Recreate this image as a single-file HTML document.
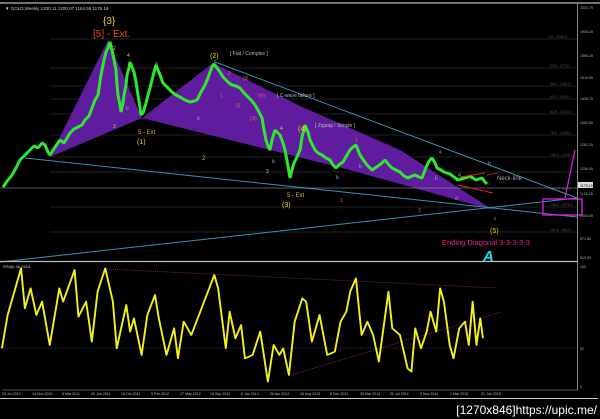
<!DOCTYPE html>
<html><head><meta charset="utf-8"><style>
html,body{margin:0;padding:0;background:#000;width:600px;height:419px;overflow:hidden}
svg{display:block}
text{font-family:"Liberation Sans",sans-serif}
</style></head><body>
<svg width="600" height="419" viewBox="0 0 600 419" xmlns="http://www.w3.org/2000/svg">
<rect width="600" height="419" fill="#000"/>
<line x1="0" y1="3" x2="600" y2="3" stroke="#999" stroke-width="1.5"/>
<text x="5" y="10" font-size="4.5" fill="#ccc">▼ GOLD,Weekly  1200.11 1200.97 1164.56 1175.19</text>
<g stroke="#2c2c2c" stroke-width="0.8">
<line x1="50" y1="39" x2="577" y2="39"/><line x1="50" y1="68" x2="577" y2="68"/>
<line x1="50" y1="86" x2="577" y2="86"/><line x1="50" y1="99" x2="577" y2="99"/>
<line x1="50" y1="114" x2="577" y2="114"/><line x1="50" y1="135" x2="577" y2="135"/>
<line x1="50" y1="157" x2="577" y2="157"/><line x1="50" y1="172" x2="577" y2="172"/>
<line x1="50" y1="207" x2="577" y2="207"/>
<line x1="50" y1="232" x2="577" y2="232"/>
</g>
<g font-size="3.5" fill="#555">
<text x="548" y="38">0.0 - 2006.5</text><text x="550" y="67">23.6 - 1775.1</text>
<text x="550" y="85">38.2 - 1631.9</text><text x="550" y="98">50.0 - 1516.3</text>
<text x="550" y="113">61.8 - 1400.6</text><text x="550" y="134">78.6 - 1236.0</text>
<text x="550" y="156">100.0 - 1026.2</text><text x="550" y="190">127.2 - 891.0</text>
<text x="550" y="206">138.2 - 1079.9</text><text x="550" y="231">161.8 - 521.0</text>
</g>
<polygon points="50,157 108,40 142,118" fill="#6a1fb0" opacity="0.9"/>
<polygon points="142,118 213,63 300,106 400,150 493,210 350,170" fill="#6a1fb0" opacity="0.9"/>
<g stroke="#3a90b5" stroke-width="1" fill="none">
<line x1="25" y1="158" x2="577" y2="217"/>
<line x1="0" y1="262" x2="577" y2="198"/>
<line x1="215" y1="62" x2="577" y2="198"/>
</g>
<line x1="0" y1="188" x2="577" y2="188" stroke="#aaa" stroke-width="0.6"/>
<polyline fill="none" stroke="#2ee82e" stroke-width="3" stroke-linejoin="bevel" points="3,187 8,180 12,175 16,168 20,160 24,156 30,150 34,146 38,148 42,143 45,145 48,152 50,155 55,147 60,140 64,143 70,133 74,129 78,127 82,125 85,120 89,116 92,108 95,100 98,95 101,75 104,60 106,52 108,48 110,42 112,50 113,55 115,65 116,70 117,85 118,95 120,105 121,112 123,103 124,95 126,85 127,75 129,68 130,62 132,67 134,72 136,82 138,95 140,108 141,115 143,113 144,110 146,103 148,95 150,88 152,80 154,72 156,65 158,70 160,75 163,83 165,85 168,88 172,92 176,95 180,97 185,100 190,102 194,101 197,100 201,92 205,85 208,78 210,72 212,67 214,64 217,68 220,72 223,77 226,80 229,83 232,85 236,86 240,88 244,93 248,97 252,101 255,105 259,112 262,118 264,130 266,140 268,146 270,150 272,140 275,130 278,133 280,135 283,143 285,150 288,166 290,178 292,170 294,163 297,157 300,150 302,137 305,125 308,132 310,140 313,146 315,150 318,153 322,155 326,158 330,160 333,165 336,168 340,164 343,162 347,155 350,150 353,147 356,145 358,150 360,155 364,161 367,165 370,168 372,170 375,168 378,166 382,163 385,160 389,165 392,168 396,170 400,172 404,176 408,178 412,176 415,175 419,177 422,178 425,170 428,163 430,160 432,158 435,163 437,168 441,170 444,172 447,173 450,174 454,177 458,180 461,179 465,178 468,177 470,176 473,178 476,180 479,179 482,178 485,182 487,184"/>
<line x1="460" y1="177" x2="485" y2="173" stroke="#e02020" stroke-width="1"/>
<line x1="458" y1="185" x2="493" y2="193" stroke="#e02020" stroke-width="1"/>
<line x1="487" y1="175" x2="498" y2="173" stroke="#e02020" stroke-width="0.8"/>
<text x="497" y="180" font-size="6" fill="#aaa">Neck-line</text>
<text x="103" y="24" font-size="10" fill="#f2d21a">{3}</text>
<text x="93" y="37" font-size="10" fill="#e8501a">[5] - Ext.</text>
<text x="210" y="58" font-size="7" fill="#f2d21a">(2)</text>
<text x="230" y="55" font-size="5" fill="#bbb">[ Flat / Complex ]</text>
<text x="277" y="97" font-size="5" fill="#bbb">[ C-wave failure ]</text>
<text x="315" y="127" font-size="5" fill="#bbb">[ Zigzag / Simple ]</text>
<text x="298" y="131" font-size="7" fill="#f2d21a">(4)</text>
<text x="137" y="144" font-size="7" fill="#f2d21a">(1)</text>
<text x="138" y="134" font-size="6" fill="#c8b850">5 - Ext</text>
<text x="282" y="207" font-size="7" fill="#f2d21a">(3)</text>
<text x="287" y="197" font-size="6" fill="#c8b850">5 - Ext</text>
<text x="490" y="233" font-size="7" fill="#f2d21a">(5)</text>
<text x="202" y="160" font-size="6" fill="#d0b030">2</text>
<g font-size="5" fill="#8aa0e0">
<text x="126" y="110">b</text><text x="197" y="120">b</text><text x="155" y="65">a</text><text x="214" y="63">c</text><text x="272" y="163">b</text><text x="336" y="179">b</text><text x="359" y="168">b</text><text x="435" y="180">b</text><text x="455" y="200">d</text><text x="488" y="165">b</text><text x="494" y="220">c</text><text x="458" y="176">a</text>
</g>
<g font-size="5" fill="#e06060">
<text x="228" y="75">2</text><text x="220" y="97">1</text><text x="236" y="107">(i)</text><text x="250" y="120">(iii)</text><text x="258" y="97">(iv)</text><text x="243" y="80">(ii)</text><text x="340" y="202">1</text><text x="418" y="212">3</text><text x="439" y="154">4</text><text x="355" y="142">2</text>
</g>
<g font-size="5" fill="#e0c040"><text x="113" y="128">3</text><text x="127" y="57">4</text><text x="266" y="173">3</text><text x="280" y="130">4</text><text x="113" y="50">2</text></g>
<rect x="543" y="199" width="39" height="16" fill="none" stroke="#e020e0" stroke-width="1.3"/>
<line x1="565" y1="198" x2="575" y2="150" stroke="#e020e0" stroke-width="1.2"/>
<text x="442" y="245" font-size="7.5" fill="#e82a8c">Ending Diagonal 3-3-3-3-3</text>
<text x="483" y="261" font-size="15" font-style="italic" font-weight="bold" fill="#18e0f0" font-family="Liberation Serif,serif">A</text>
<line x1="577.5" y1="4" x2="577.5" y2="261" stroke="#aaa" stroke-width="0.8"/>
<rect x="578" y="182" width="15" height="6" fill="#ddd"/>
<text x="580" y="187" font-size="3.6" fill="#000">1175.19</text>
<g font-size="3.6" fill="#aaa">
<text x="580" y="9">2003.75</text><text x="580" y="33">1905.25</text><text x="580" y="57">1595.35</text><text x="580" y="79">1516.95</text><text x="580" y="100">1438.75</text><text x="580" y="124">1360.55</text><text x="580" y="146">1282.35</text><text x="580" y="170">1206.45</text><text x="580" y="195">1128.25</text><text x="580" y="217">1050.05</text><text x="580" y="240">971.85</text><text x="580" y="259">810.65</text>
</g>
<line x1="0" y1="261.5" x2="578" y2="261.5" stroke="#bbb" stroke-width="1.2"/>
<text x="3" y="268" font-size="4" fill="#ccc">RSI(8) 46.2918</text>
<line x1="107" y1="269" x2="497" y2="288" stroke="#a020a0" stroke-width="0.7" stroke-dasharray="1,1"/>
<line x1="291" y1="375" x2="501" y2="312" stroke="#a020a0" stroke-width="0.7" stroke-dasharray="1,1"/>
<line x1="0" y1="348" x2="577" y2="348" stroke="#777" stroke-width="0.5" stroke-dasharray="1,1.5"/>
<g transform="translate(0,255) scale(0.3827,0.3333)">
<polyline fill="none" stroke="#f4f01a" stroke-width="5" stroke-linejoin="round" points="5,280 20,180 35,120 55,40 65,160 80,100 95,180 110,140 130,270 155,100 165,140 195,45 205,185 225,140 240,260 255,110 275,40 295,140 305,280 330,150 340,230 350,190 370,300 385,180 405,120 415,190 435,300 455,220 465,310 480,200 500,240 520,180 540,120 560,60 570,100 590,280 600,170 615,250 630,210 640,310 660,300 680,230 700,380 715,270 730,300 740,280 755,360 770,200 790,130 800,140 815,260 835,180 855,300 875,290 890,200 905,170 915,110 930,70 945,240 960,200 975,240 990,320 1015,110 1025,220 1045,240 1065,340 1075,350 1085,220 1100,280 1115,230 1125,170 1140,230 1150,100 1160,140 1175,270 1185,310 1200,220 1215,200 1225,270 1235,140 1245,270 1255,190 1262,250"/>
</g>
<line x1="577.5" y1="262" x2="577.5" y2="390" stroke="#aaa" stroke-width="0.8"/>
<line x1="2" y1="390" x2="578" y2="390" stroke="#aaa" stroke-width="0.6"/>
<g font-size="3.6" fill="#aaa"><text x="580" y="268">100</text><text x="580" y="350">52</text><text x="580" y="388">0</text></g>
<g font-size="3.6" fill="#bbb">
<text x="2" y="395">25 Jul 2010</text><text x="32" y="395">14 Nov 2010</text><text x="62" y="395">6 Mar 2011</text><text x="91" y="395">26 Jun 2011</text><text x="121" y="395">16 Oct 2011</text><text x="151" y="395">5 Feb 2012</text><text x="180" y="395">27 May 2012</text><text x="210" y="395">16 Sep 2012</text><text x="241" y="395">6 Jan 2013</text><text x="270" y="395">28 Apr 2013</text><text x="300" y="395">18 Aug 2013</text><text x="330" y="395">8 Dec 2013</text><text x="360" y="395">30 Mar 2014</text><text x="390" y="395">20 Jul 2014</text><text x="420" y="395">9 Nov 2014</text><text x="450" y="395">1 Mar 2015</text><text x="481" y="395">21 Jun 2015</text>
</g>
<line x1="0" y1="398.5" x2="598" y2="398.5" stroke="#ccc" stroke-width="1"/>
<text x="597" y="414" font-size="12" fill="#fff" text-anchor="end" font-family="Liberation Mono,monospace">[1270x846]https://upic.me/</text>
</svg>
</body></html>
